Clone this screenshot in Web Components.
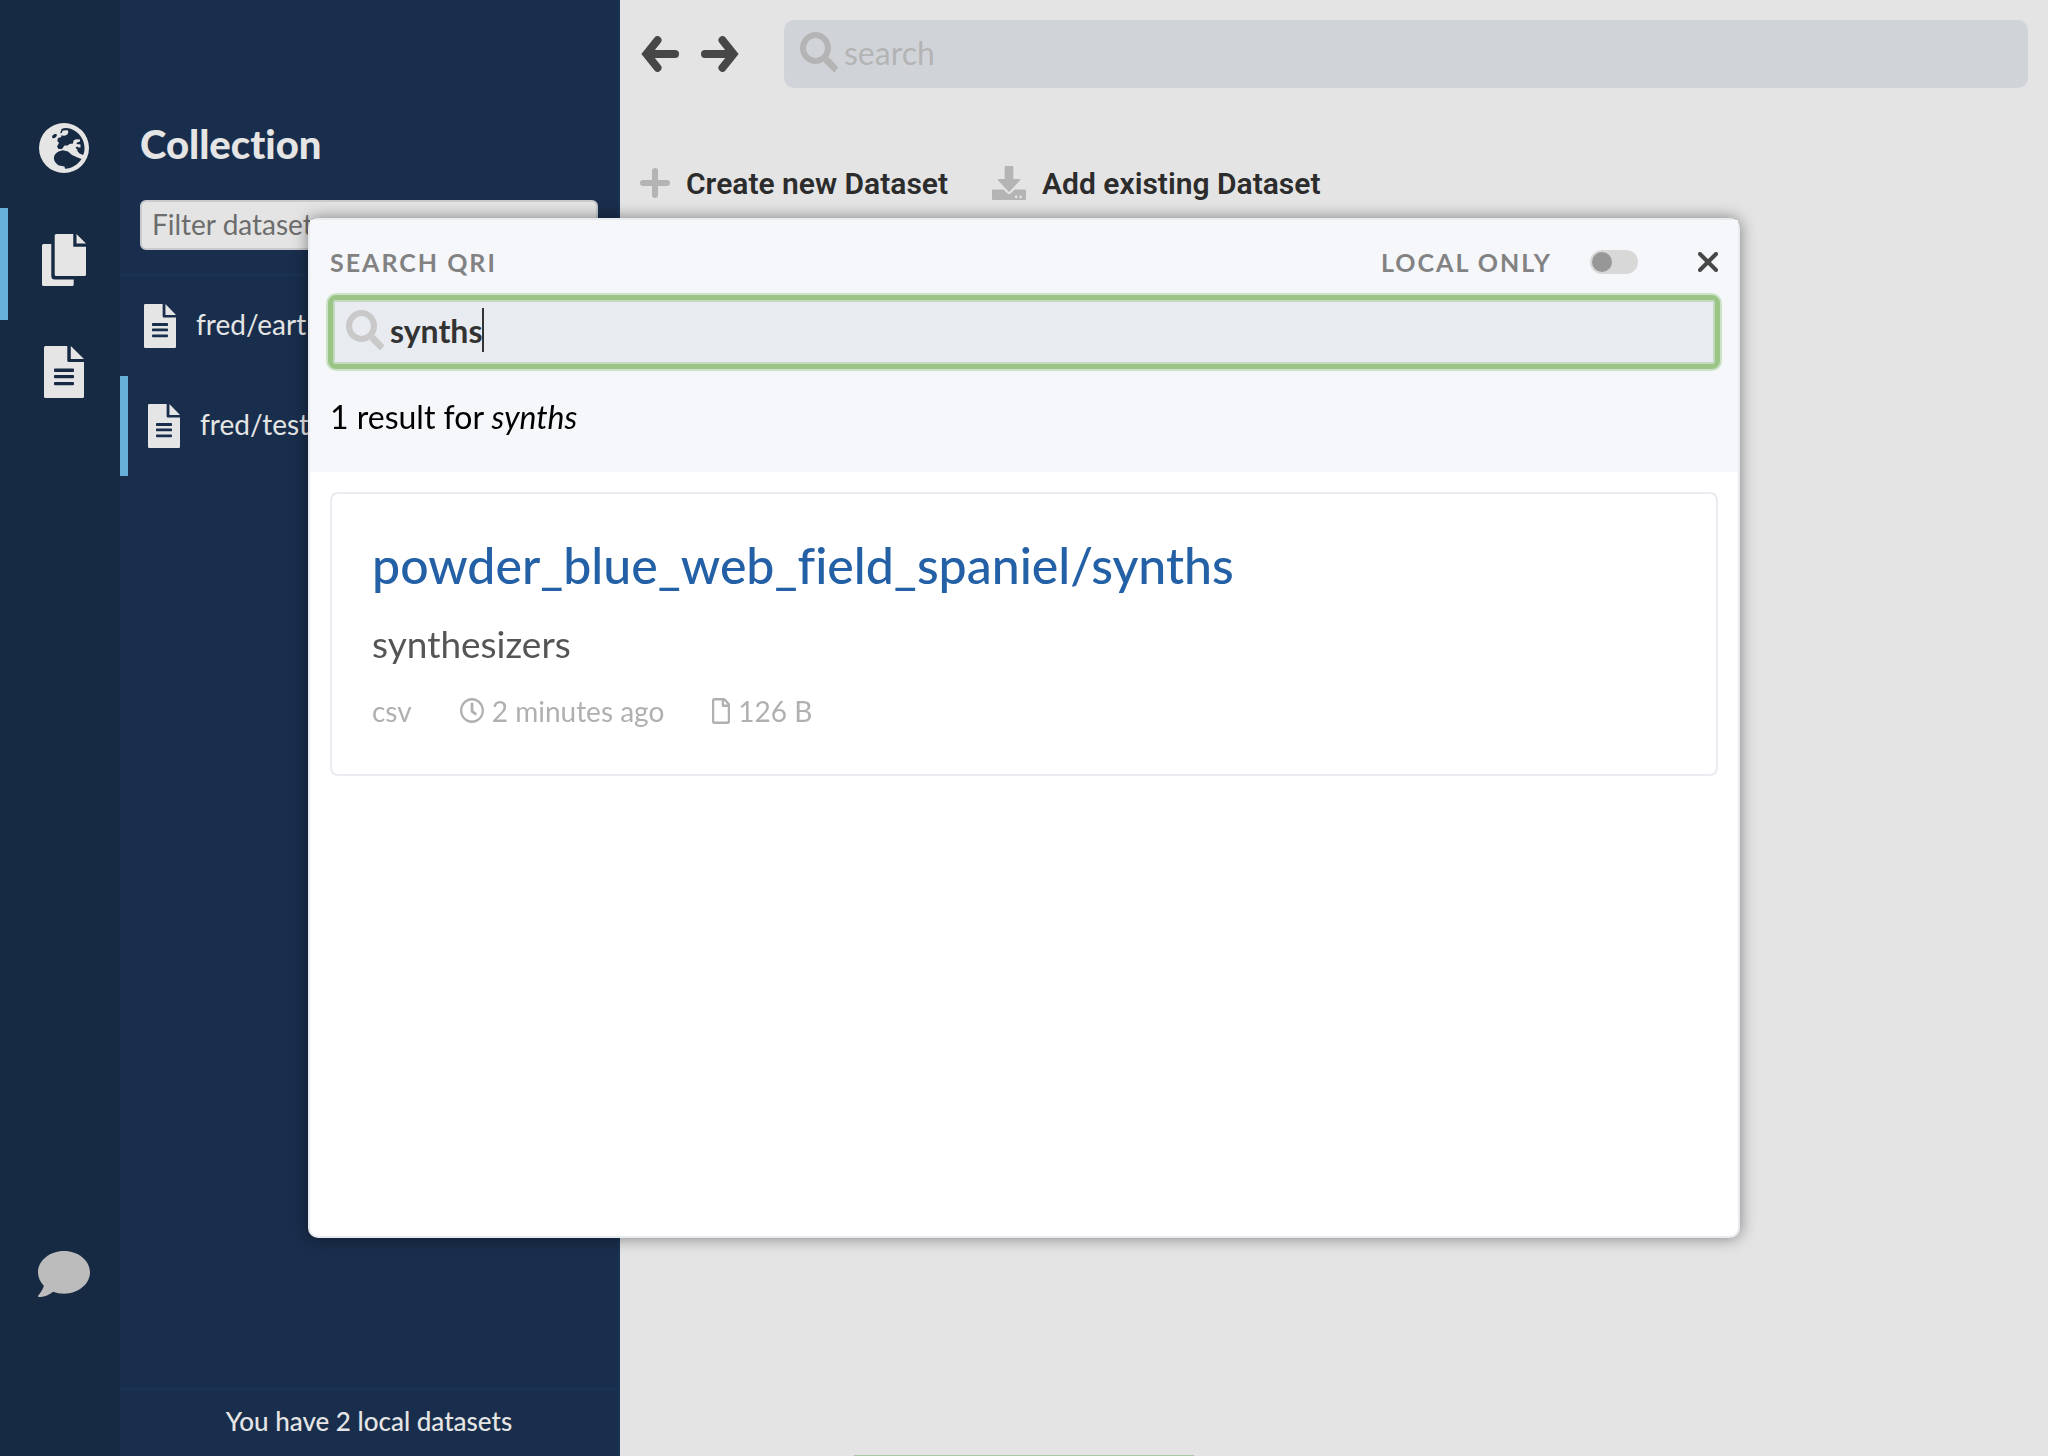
<!DOCTYPE html>
<html lang="en">
<head>
<meta charset="utf-8">
<title>Qri Desktop</title>
<style>
html, body { height: 100%; margin: 0; }
body { font-family: Lato, "Liberation Sans", sans-serif; font-variant-ligatures: none; background: #e4e4e4; overflow: hidden; }
</style>
</head>
<body>
<qri-app></qri-app>
<script>
const define = (name, html, setup) => {
  const template = document.createElement('template');
  template.innerHTML = '<style>*{box-sizing:border-box}svg{display:block;flex:none}button,input{font:inherit;color:inherit;border:0;background:none;margin:0;padding:0}a{color:inherit;text-decoration:none}</style>' + html;
  customElements.define(name, class extends HTMLElement {
    constructor() {
      super();
      this.attachShadow({ mode: 'open' }).append(template.content.cloneNode(true));
    }
    connectedCallback() { if (setup) setup(this, this.shadowRoot); }
  });
};

const ICONS = {
  globe: [50, 50, '0 0 50 50', '<path fill="currentColor" fill-rule="evenodd" d="M25 0a25 25 0 1 0 0 50a25 25 0 0 0 0-50zM22.500 6C26 4 32 5 36 8C42 12 45.500 18 45.500 25C45.500 28 45 30.500 44 32L40.500 30.500L37.500 27L32 26L28.500 22.500L25.500 22.500L23 26L19.500 26L18 23.500L20 20L18.300 18L19 15L22.500 14L21 11zM13.500 12.500C14.500 11 17 10.500 18 11.500C18 13.500 16 15.500 14.200 15.300C13 15 13 13.500 13.500 12.500zM15 34C16 30 20 27.500 24 27.200L29 28.500L33 32L38.500 34.500L42.500 36C39 41.500 33 45.500 26 45.800L25.500 43.500L20 42.500C16.500 40.500 14.500 37.500 15 34z"/><path fill="none" stroke="currentColor" stroke-width="2.600" stroke-linejoin="round" stroke-linecap="round" d="M21.500 11.500L24 11L24.500 8.800L28 8.500L27.500 10.500L25 11.500"/><path fill="currentColor" d="M27.500 23.500L30.500 21L34 20.500L34.500 17.500L37 16.300L41 16.500L41 18.500L38 19.500L37.500 21L41.500 21.500L41.500 24.500L39.500 24.500L38.500 23.500L36.500 24.500L39 27.500L32 27z"/>'],
  files: [44, 52, '0 0 44 52', '<path fill="currentColor" d="M14.200 0H31.300V12.700H44V40.500a1.500 1.500 0 0 1-1.500 1.500H14.200a1.500 1.500 0 0 1-1.500-1.500V1.500A1.500 1.500 0 0 1 14.200 0zM34.500 0L44 9.500H34.500zM1.500 10H9.300V42a3.500 3.500 0 0 0 3.500 3.500H31.700V50.500a1.500 1.500 0 0 1-1.500 1.500H1.500A1.500 1.500 0 0 1 0 50.500V11.500A1.500 1.500 0 0 1 1.500 10z"/>'],
  file: [40, 52, '0 0 40 52', '<path fill="currentColor" fill-rule="evenodd" d="M1.500 0H23.300V14.500a1.500 1.500 0 0 0 1.500 1.500H40V50.500a1.500 1.500 0 0 1-1.500 1.500H1.500A1.500 1.500 0 0 1 0 50.500V1.500A1.500 1.500 0 0 1 1.500 0zM26.800 0L40 13H26.800zM11 22.500a1 1 0 0 0-1 1v1.500a1 1 0 0 0 1 1h18a1 1 0 0 0 1-1v-1.500a1 1 0 0 0-1-1zM11 29a1 1 0 0 0-1 1v1.200a1 1 0 0 0 1 1h18a1 1 0 0 0 1-1v-1.200a1 1 0 0 0-1-1zM11 36a1 1 0 0 0-1 1v1.200a1 1 0 0 0 1 1h18a1 1 0 0 0 1-1v-1.200a1 1 0 0 0-1-1z"/>'],
  comment: [52, 46, '0 32 512 448', '<path fill="currentColor" d="M256 32C114.600 32 0 125.100 0 240c0 49.600 21.400 95 57 130.700C44.500 421.100 2.700 466 2.200 466.500c-2.200 2.300-2.800 5.700-1.500 8.700S4.800 480 8 480c66.300 0 116-31.800 140.600-51.400 32.700 12.300 69 19.400 107.400 19.400 141.400 0 256-93.100 256-208S397.400 32 256 32z"/>'],
  back: [40, 36, '0 0 40 36', '<path fill="none" stroke="currentColor" stroke-width="8" stroke-linecap="round" d="M35 18H8M17.500 4.200L6.500 18L17.500 31.800"/>'],
  forward: [40, 36, '0 0 40 36', '<path fill="none" stroke="currentColor" stroke-width="8" stroke-linecap="round" d="M5 18H32M22.500 4.200L33.500 18L22.500 31.800"/>'],
  search: [38, 40, '0 0 38 40', '<ellipse cx="15.500" cy="16" rx="12.500" ry="13" fill="none" stroke="currentColor" stroke-width="6"/><path fill="currentColor" stroke="currentColor" stroke-width="2" stroke-linejoin="round" d="M28.500 26.500L37 35.500L34 39L25 30z"/>'],
  plus: [30, 30, '0 0 30 30', '<path fill="none" stroke="currentColor" stroke-width="6" stroke-linecap="round" d="M15 3V27M3 15H27"/>'],
  download: [34, 34, '0 0 34 34', '<path fill="currentColor" fill-rule="evenodd" d="M14 0H20a1.300 1.300 0 0 1 1.300 1.300V13H27.500a.8.8 0 0 1 .6 1.300L17.600 25.500a.8.8 0 0 1-1.200 0L5.900 14.300A.8.800 0 0 1 6.500 13H12.700V1.300A1.300 1.300 0 0 1 14 0zM1.300 23.500H11.500L15.200 27.200a2.500 2.500 0 0 0 3.600 0L22.500 23.500H32.700A1.300 1.300 0 0 1 34 24.800V32.700A1.300 1.300 0 0 1 32.700 34H1.300A1.300 1.300 0 0 1 0 32.700V24.800A1.300 1.300 0 0 1 1.300 23.500zM24.200 29.600a1.300 1.300 0 1 0 0 2.600a1.300 1.300 0 0 0 0-2.600zM28.700 29.600a1.300 1.300 0 1 0 0 2.600a1.300 1.300 0 0 0 0-2.600z"/>'],
  close: [20, 20, '0 0 20 20', '<path fill="none" stroke="currentColor" stroke-width="4" stroke-linecap="round" d="M2 2L18 18M18 2L2 18"/>'],
  clock: [24, 25, '8 8 496 496', '<path fill="currentColor" d="M256 8C119 8 8 119 8 256s111 248 248 248 248-111 248-248S393 8 256 8zm0 448c-110.500 0-200-89.500-200-200S145.500 56 256 56s200 89.500 200 200-89.500 200-200 200zm61.800-104.400l-84.900-61.700c-3.100-2.300-4.900-5.900-4.900-9.700V116c0-6.600 5.400-12 12-12h32c6.600 0 12 5.400 12 12v141.700l66.800 48.600c5.400 3.900 6.500 11.400 2.600 16.800L334.600 349c-3.900 5.300-11.400 6.500-16.800 2.600z"/>'],
  page: [18, 26, '0 0 384 512', '<path fill="currentColor" d="M369.900 97.900L286 14C277 5 264.800-.1 252.100-.1H48C21.500 0 0 21.500 0 48v416c0 26.500 21.500 48 48 48h288c26.500 0 48-21.500 48-48V131.900c0-12.700-5.100-25-14.100-34zM332.100 128H256V51.900l76.100 76.100zM48 464V48h160v104c0 13.300 10.700 24 24 24h104v288H48z"/>']
};

define('qri-icon', '<style>:host{display:block;flex:none}.glyph{display:block}</style><span class="glyph"></span>', (host, root) => {
  const [w, h, box, body] = ICONS[host.getAttribute('name')];
  const width = host.getAttribute('width') || w, height = host.getAttribute('height') || h;
  root.querySelector('.glyph').innerHTML =
    `<svg width="${width}" height="${height}" viewBox="${box}" preserveAspectRatio="none" aria-hidden="true">${body}</svg>`;
});

define('rail-item', `<style>
:host{display:block}
button{display:flex;align-items:center;justify-content:center;width:100%;height:112px;padding-bottom:8px;border-left:8px solid transparent;color:#e5e5e5}
:host([active]) button{border-color:#66b0d9}
:host([muted]) button{color:#bcbcbc}
</style><button><slot></slot></button>`, (host, root) =>
  root.querySelector('button').setAttribute('aria-label', host.getAttribute('label')));

define('nav-rail', `<style>
:host{display:flex;flex-direction:column;justify-content:space-between;width:120px;flex:none;padding:96px 0 122px;background:#172a43}
</style>
<div>
<rail-item label="Network"><qri-icon name="globe"></qri-icon></rail-item>
<rail-item label="Collection" active><qri-icon name="files"></qri-icon></rail-item>
<rail-item label="Dataset"><qri-icon name="file"></qri-icon></rail-item>
</div>
<rail-item label="Chat" muted><qri-icon name="comment"></qri-icon></rail-item>`);

define('dataset-item', `<style>
:host{display:block}
a{display:flex;align-items:center;gap:20px;height:100px;padding-left:24px;font-size:28px;line-height:34px}
:host([active]) a{border-left:8px solid #66b0d9;padding-left:20px}
span{padding-bottom:4px}
</style><a href="#"><qri-icon name="file" width="32" height="44"></qri-icon><span><slot></slot></span></a>`);

define('collection-sidebar', `<style>
:host{display:flex;flex-direction:column;width:500px;flex:none;background:#192e4c;border-right:2px solid #193354;color:#e5e5e5}
header{padding:120px 20px 24px;border-bottom:2px solid #193354}
h1{margin:0 0 32px;font-size:40px;line-height:48px;font-weight:900}
input{display:block;width:100%;height:50px;padding:0 10px 2px;border:2px solid #c9cacd;border-radius:6px;background:#e4e4e4;font-size:28px;color:#333}
input::placeholder{color:#6d6d6d;opacity:1}
nav{flex:1}
footer{border-top:2px solid #193354;padding:14px 0 18px;text-align:center;font-size:26px;line-height:34px;font-weight:500}
</style>
<header><h1>Collection</h1><input type="text" aria-label="Filter datasets" placeholder="Filter datasets"></header>
<nav><dataset-item>fred/eart</dataset-item><dataset-item active>fred/test</dataset-item></nav>
<footer>You have 2 local datasets</footer>`);

define('action-button', `<style>
:host{display:block}
button{display:flex;align-items:center;gap:16px;height:34px;font:600 30px/34px Roboto,"Liberation Sans",sans-serif;color:#2c2c2c}
span{padding-top:2px}
</style><button><slot name="icon"></slot><span><slot></slot></span></button>`);

define('main-pane', `<style>
:host{display:flex;flex-direction:column;gap:78px;flex:1;min-width:0;padding:20px}
.bar,.nav,.actions{display:flex;align-items:center}
.bar{gap:44px}
.nav{gap:20px;color:#474747}
.nav button{display:block}
.search{display:flex;align-items:center;gap:6px;flex:1;height:68px;padding:0 16px 4px;border-radius:10px;background:#d0d4d9;color:#b4b4b4}
.search input{flex:1;min-width:0;font-size:32px;outline:0}
.search input::placeholder{color:#b4b4b4;opacity:1}
.actions{gap:44px}
.actions qri-icon{color:#b4b4b4}
</style>
<div class="bar">
<div class="nav"><button aria-label="Back"><qri-icon name="back"></qri-icon></button><button aria-label="Forward"><qri-icon name="forward"></qri-icon></button></div>
<label class="search"><qri-icon name="search"></qri-icon><input type="text" placeholder="search" aria-label="search"></label>
</div>
<div class="actions">
<action-button><qri-icon slot="icon" name="plus"></qri-icon>Create new Dataset</action-button>
<action-button><qri-icon slot="icon" name="download"></qri-icon>Add existing Dataset</action-button>
</div>`);

define('result-card', `<style>
:host{display:block;padding:42px 40px 46px;border:2px solid #e8ebf0;border-radius:8px}
h2{margin:0 0 28px;font-size:50px;line-height:58px;font-weight:500;color:#2360a5}
p{margin:0 0 27px;font-size:37px;line-height:44px;color:#555}
.meta{display:flex;gap:48px;height:35px;font-size:28px;line-height:34px;color:#b0b0b0}
</style>
<h2><a href="#"><slot name="title"></slot></a></h2>
<p><slot name="description"></slot></p>
<div class="meta"><slot></slot></div>`);

define('meta-item', `<style>
:host{display:flex;align-items:center;gap:8px}
</style><slot></slot>`);

define('search-modal', `<style>
:host{position:fixed;inset:218px 308px;display:flex;flex-direction:column;border:2px solid #e8ebef;border-radius:10px;background:#fff;box-shadow:0 0 16px rgba(0,0,0,.45)}
header{padding:27px 20px 36px;background:#f5f7fb}
.row{display:flex;align-items:center;height:30px;margin-bottom:18px;font-size:25px;line-height:30px;font-weight:700;letter-spacing:2px;color:#828282}
.row label:first-child{flex:1}
.toggle{appearance:none;width:48px;height:24px;margin:0 60px 0 38px;border-radius:12px;background:#d8d8d8;padding:2px}
.toggle::before{content:"";display:block;width:20px;height:20px;border-radius:50%;background:#979797}
.row button{color:#474747}
.field{display:flex;align-items:center;height:74px;margin:0 -2px;padding:0 13px 4px;border:5px solid #9bc587;border-radius:8px;background:#e8ebf0;box-shadow:0 0 0 2px #cfe2ca,inset 0 0 0 2px #c5dac0;color:#c9c9c9}
.field input{field-sizing:content;margin-left:6px;font-size:32px;font-weight:700;color:#333;outline:0}
.caret{width:2px;height:44px;background:#333}
p{margin:29px 0 0;font-size:32px;line-height:38px;color:#000}
section{flex:1;padding:20px}
</style>
<header>
<div class="row"><label for="q">SEARCH QRI</label><label for="local">LOCAL ONLY</label><input class="toggle" id="local" type="checkbox"><button aria-label="Close"><qri-icon name="close"></qri-icon></button></div>
<div class="field"><qri-icon name="search"></qri-icon><input id="q" type="text" value="synths"><span class="caret"></span></div>
<p>1 result for <em>synths</em></p>
</header>
<section>
<result-card>
<span slot="title">powder_blue_web_field_spaniel/synths</span>
<span slot="description">synthesizers</span>
<meta-item>csv</meta-item>
<meta-item><qri-icon name="clock"></qri-icon>2 minutes ago</meta-item>
<meta-item><qri-icon name="page"></qri-icon>126 B</meta-item>
</result-card>
</section>`);

define('toast-edge', `<style>
:host{position:fixed;bottom:0;left:0;right:0;width:340px;height:1px;margin:0 auto;background:#a8caa2}
</style>`);

define('qri-app', `<style>
:host{display:flex;height:100vh}
</style>
<nav-rail></nav-rail><collection-sidebar></collection-sidebar><main-pane></main-pane><toast-edge></toast-edge><search-modal></search-modal>`);
</script>
</body>
</html>
